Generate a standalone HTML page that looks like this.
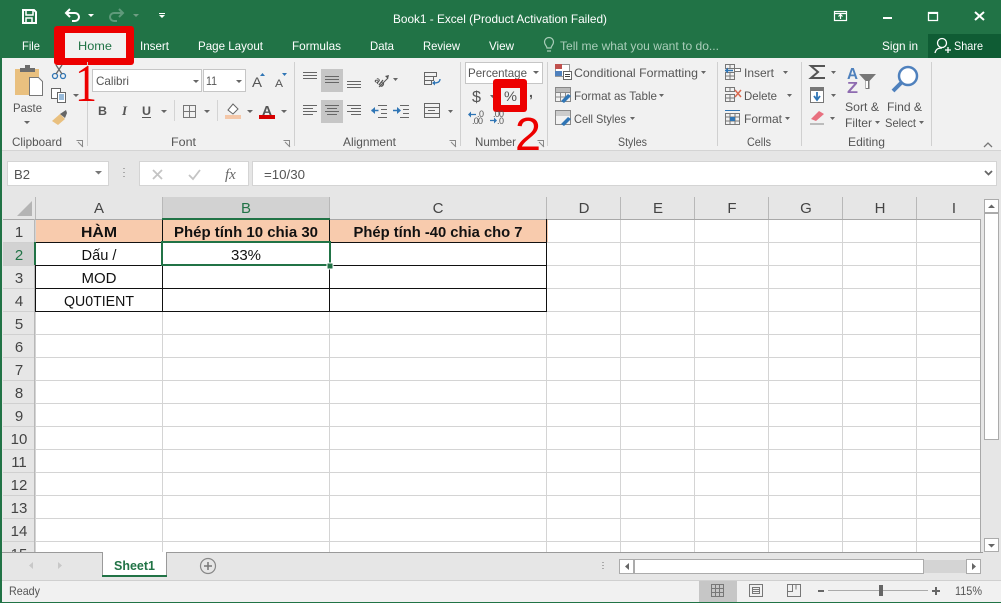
<!DOCTYPE html>
<html><head><meta charset="utf-8"><style>
html,body{margin:0;padding:0;background:#e6e6e6;width:1001px;height:603px;overflow:hidden}
svg{display:block}
text{font-family:"Liberation Sans",sans-serif;font-size:12px;fill:#444}
.w{fill:#fff}
.g{fill:#555}
.c{fill:#111;font-size:15px;text-anchor:middle}
.b{font-weight:bold}
.h{fill:#444;font-size:15px;text-anchor:middle}
.a{fill:#217346;font-size:15px;text-anchor:middle}
</style></head><body>
<svg width="1001" height="603" viewBox="0 0 1001 603" xmlns="http://www.w3.org/2000/svg">
<!-- backgrounds -->
<rect width="1001" height="603" fill="#e6e6e6"/>
<rect width="1001" height="58" fill="#217346"/>
<rect y="58" width="1001" height="92" fill="#f1f1f1"/>
<rect y="150" width="1001" height="1" fill="#d4d4d4"/>
<rect x="928" y="34" width="73" height="24" fill="#0f5c34"/>

<!-- Home highlight -->
<rect x="54" y="26" width="80" height="39" rx="3" fill="#ed0000"/>
<rect x="65" y="33" width="61" height="25" fill="#f1f1f1"/>

<!-- QAT -->
<g fill="none" stroke="#fff" stroke-width="2">
<path d="M23 10h11l2 2v11H23z"/><path d="M26 10v5h7v-5" stroke-width="1.500"/><path d="M26 23v-5h6v5" stroke-width="1.500"/>
<path d="M66 13h9a4 4 0 0 1 0 8h-3"/><path d="M70 9l-4 4 4 4"/>
</g>
<path d="M88 14h6l-3 3z" fill="#fff"/><path d="M133 14h6l-3 3z" fill="#6f9e83"/>
<g fill="none" stroke="#5f9a7b" stroke-width="2"><path d="M123 13h-9a4 4 0 0 0 0 8h3"/><path d="M119 9l4 4-4 4"/></g>
<path d="M159 13h6v1h-6z M159 15h6l-3 3z" fill="#fff"/>

<!-- title -->
<text x="393" y="23" class="w" textLength="214" lengthAdjust="spacingAndGlyphs">Book1 - Excel (Product Activation Failed)</text>
<g fill="none" stroke="#fff" stroke-width="1.200"><rect x="834.500" y="11.500" width="12" height="9"/><path d="M835 13.500h11M840.500 19v-4M838.500 16.500l2-2 2 2"/></g>
<rect x="883" y="17" width="9" height="2" fill="#fff"/>
<path d="M928.500 12.500h9v8h-9z" fill="none" stroke="#fff" stroke-width="1.300"/><rect x="928" y="12" width="10" height="2" fill="#fff"/>
<path d="M975 12l9 8M984 12l-9 8" stroke="#fff" stroke-width="2"/>

<!-- tabs -->
<text x="22" y="50" class="w" textLength="18" lengthAdjust="spacingAndGlyphs">File</text>
<text x="78" y="50" style="fill:#217346" textLength="34" lengthAdjust="spacingAndGlyphs">Home</text>
<text x="140" y="50" class="w" textLength="29" lengthAdjust="spacingAndGlyphs">Insert</text>
<text x="198" y="50" class="w" textLength="65" lengthAdjust="spacingAndGlyphs">Page Layout</text>
<text x="292" y="50" class="w" textLength="49" lengthAdjust="spacingAndGlyphs">Formulas</text>
<text x="370" y="50" class="w" textLength="24" lengthAdjust="spacingAndGlyphs">Data</text>
<text x="423" y="50" class="w" textLength="37" lengthAdjust="spacingAndGlyphs">Review</text>
<text x="489" y="50" class="w" textLength="25" lengthAdjust="spacingAndGlyphs">View</text>
<text x="560" y="50" style="fill:#a9cdb9" textLength="159" lengthAdjust="spacingAndGlyphs">Tell me what you want to do...</text>
<text x="882" y="50" class="w" textLength="36" lengthAdjust="spacingAndGlyphs">Sign in</text>
<text x="954" y="50" class="w" textLength="29" lengthAdjust="spacingAndGlyphs">Share</text>
<g fill="none" stroke="#a9cdb9" stroke-width="1.200"><path d="M547 48c0-2-2.500-3-2.500-6a4.500 4.500 0 0 1 9 0c0 3-2.500 4-2.500 6zM547 51h4"/></g>
<g fill="none" stroke="#fff" stroke-width="1.300"><circle cx="942" cy="43" r="4.500"/><path d="M935 53c1-4 3-5 7-5M945 50h6M948 47v6"/></g>

<!-- clipboard -->
<path d="M15 69h9v-1h8v1h7v26H15z" fill="#e9c07f"/><rect x="20" y="68" width="15" height="4" fill="#6d6d6d"/><rect x="25" y="65" width="5" height="4" fill="#6d6d6d"/>
<path d="M29.500 77.500h9l4 4v14h-13z" fill="#fff" stroke="#777"/>
<text x="13" y="112" class="g" textLength="29" lengthAdjust="spacingAndGlyphs">Paste</text>
<path d="M24 121h6l-3 3zM73 94h6l-3 3z" fill="#666"/>
<g fill="none" stroke="#2f75b5" stroke-width="1.300"><circle cx="55" cy="76" r="2.500"/><circle cx="63" cy="76" r="2.500"/></g><path d="M56 74l6-9M62 74l-6-9" stroke="#666" stroke-width="1.300"/>
<g fill="#fff" stroke="#666"><rect x="51.500" y="88.500" width="9" height="10"/><rect x="57.500" y="92.500" width="8" height="10"/></g><path d="M59 95h5M59 97h5M59 99h5" stroke="#2f75b5"/>
<path d="M52 121l8-7 5 5-7 6z" fill="#e9c07f"/><path d="M60 114l6-4 1 3-2 5z" fill="#666"/>
<text x="12" y="146" class="g" textLength="50" lengthAdjust="spacingAndGlyphs">Clipboard</text>
<path d="M76.500 140.500h6v6M78 142l5 5" fill="none" stroke="#888"/>
<rect x="87" y="62" width="1" height="84" fill="#d0d0d0"/>

<!-- font -->
<rect x="92.500" y="69.500" width="109" height="22" fill="#fff" stroke="#c6c6c6"/><rect x="203.500" y="69.500" width="42" height="22" fill="#fff" stroke="#c6c6c6"/>
<text x="96" y="85" class="g" textLength="33" lengthAdjust="spacingAndGlyphs">Calibri</text>
<text x="206" y="85" class="g" textLength="11" lengthAdjust="spacingAndGlyphs">11</text>
<path d="M193 80h6l-3 3zM236 80h6l-3 3z" fill="#666"/>
<text x="252" y="87" class="g" style="font-size:14px" textLength="10" lengthAdjust="spacingAndGlyphs">A</text><path d="M260 76h5l-2.500-3z" fill="#2f75b5"/>
<text x="275" y="87" class="g" style="font-size:11px" textLength="8" lengthAdjust="spacingAndGlyphs">A</text><path d="M282 73h5l-2.500 3z" fill="#2f75b5"/>
<text x="98" y="115" class="g b" textLength="9" lengthAdjust="spacingAndGlyphs">B</text>
<text x="122" y="115" class="g" style="font-style:italic;font-family:'Liberation Serif',serif;font-size:13px;font-weight:bold">I</text>
<text x="142" y="115" class="g b" textLength="9" lengthAdjust="spacingAndGlyphs">U</text><rect x="142" y="117" width="9" height="1" fill="#555"/>
<path d="M161 110h6l-3 3zM204 110h6l-3 3zM247 110h6l-3 3zM281 110h6l-3 3z" fill="#666"/>
<rect x="174" y="100" width="1" height="21" fill="#d4d4d4"/><rect x="217" y="100" width="1" height="21" fill="#d4d4d4"/>
<path d="M183.500 105.500h12v12h-12zM189.500 105v13M183 111.500h13" fill="none" stroke="#777"/>
<path d="M228 110l5-6 5 5-5 5z" fill="#fff" stroke="#666"/><rect x="225" y="115" width="16" height="4" fill="#f4c7a8"/>
<text x="262" y="115" class="g b" style="font-size:13px" textLength="10" lengthAdjust="spacingAndGlyphs">A</text><rect x="259" y="115" width="16" height="4" fill="#d60000"/>
<text x="171" y="146" class="g" textLength="25" lengthAdjust="spacingAndGlyphs">Font</text>
<path d="M283.500 140.500h6v6M285 142l5 5" fill="none" stroke="#888"/>
<rect x="294" y="62" width="1" height="84" fill="#d0d0d0"/>

<!-- alignment -->
<rect x="321" y="69" width="22" height="23" fill="#c6c6c6"/><rect x="321" y="100" width="22" height="23" fill="#c6c6c6"/>
<g stroke="#666" fill="none">
<path d="M303 72.500h14M303 75.500h14M303 78.500h14"/>
<path d="M325 76.500h14M325 79.500h14M325 82.500h14"/>
<path d="M347 81.500h14M347 84.500h14M347 87.500h14"/>
<path d="M303 105.500h14M303 108.500h10M303 111.500h14M303 114.500h10"/>
<path d="M325 105.500h14M327 108.500h10M325 111.500h14M327 114.500h10"/>
<path d="M347 105.500h14M351 108.500h10M347 111.500h14M351 114.500h10"/>
<path d="M378 105.500h9M381 109.500h6M381 113.500h6M378 117.500h9M400 105.500h9M403 109.500h6M403 113.500h6M400 117.500h9"/>
<path d="M424.500 72.500h12v4h-12zM424.500 76.500h9v4h-9zM424.500 80.500h7v4h-7z"/>
<path d="M424.500 103.500h15v14h-15zM424 107.500h16M424 113.500h16"/>
<path d="M428 110.500h7"/>
</g>
<text x="374" y="81" transform="rotate(40 374 81)" class="g b" style="font-size:9px">ab</text>
<path d="M379 87l9-9" stroke="#555"/><path d="M385 76l4-1-1 4z" fill="#555"/>
<path d="M371.500 110.500h7M393 110.500h7" stroke="#2f75b5" stroke-width="1.500" fill="none"/><path d="M371 110.500l4-3.500v7z" fill="#2f75b5"/><path d="M401 110.500l-4-3.500v7z" fill="#2f75b5"/>
<path d="M393 78h5l-2.500 3zM448 110h5l-2.500 3z" fill="#666"/>
<path d="M440 79c0 3-2 4-7 4" fill="none" stroke="#2f75b5" stroke-width="1.300"/><path d="M432 83l3-2.500v5z" fill="#2f75b5"/>
<text x="343" y="146" class="g" textLength="53" lengthAdjust="spacingAndGlyphs">Alignment</text>
<path d="M449.500 140.500h6v6M451 142l5 5" fill="none" stroke="#888"/>
<rect x="460" y="62" width="1" height="84" fill="#d0d0d0"/>

<!-- number -->
<rect x="465.500" y="62.500" width="77" height="21" fill="#fff" stroke="#c6c6c6"/>
<text x="468" y="77" class="g" textLength="59" lengthAdjust="spacingAndGlyphs">Percentage</text>
<path d="M533 71h6l-3 3z" fill="#666"/>
<text x="472" y="102" class="g" style="font-size:16px" textLength="9" lengthAdjust="spacingAndGlyphs">$</text>
<path d="M490 95h5l-2.500 3z" fill="#666"/>
<rect x="493" y="79" width="34" height="33" rx="3" fill="#ed0000"/>
<rect x="501" y="88" width="19" height="17" fill="#f1f1f1"/>
<text x="504" y="101" class="g" style="font-size:14px" textLength="13" lengthAdjust="spacingAndGlyphs">%</text>
<text x="529" y="97" class="g b" style="font-size:14px">,</text>
<text x="477" y="117" class="g" style="font-size:9px" textLength="7">.0</text><text x="472" y="124" class="g" style="font-size:9px" textLength="11">.00</text>
<text x="493" y="117" class="g" style="font-size:9px" textLength="11">.00</text><text x="497" y="124" class="g" style="font-size:9px" textLength="7">.0</text>
<path d="M469 114.500h7M490 120.500h6" stroke="#2f75b5" stroke-width="1.200" fill="none"/><path d="M468 114.500l3-3v6z" fill="#2f75b5"/><path d="M497 120.500l-3-3v6z" fill="#2f75b5"/>
<text x="475" y="146" class="g" textLength="41" lengthAdjust="spacingAndGlyphs">Number</text>
<path d="M537.500 140.500h6v6M539 142l5 5" fill="none" stroke="#888"/>
<rect x="547" y="62" width="1" height="84" fill="#d0d0d0"/>

<!-- styles -->
<rect x="555.500" y="64.500" width="14" height="12" fill="#fff" stroke="#999"/>
<rect x="555" y="64" width="7" height="5" fill="#c0504d"/><rect x="555" y="71" width="7" height="5" fill="#4f81bd"/>
<rect x="563.500" y="71.500" width="8" height="8" fill="#fff" stroke="#666"/><path d="M565 74.500h5M565 76.500h5" stroke="#444"/>
<g fill="none" stroke="#888"><path d="M555.500 87.500h15v14h-15zM555.500 92.500h15M555.500 97h15M560.500 87.500v14M565.500 87.500v14"/><path d="M555.500 110.500h15v14h-15z"/></g>
<rect x="556" y="88" width="14" height="4" fill="#bbb"/><rect x="556" y="111" width="14" height="5" fill="#ccc"/>
<path d="M561 101l7-7 3 2-7 7zM561 124l7-7 3 2-7 7z" fill="#2f75b5"/>
<text x="574" y="77" class="g" textLength="124" lengthAdjust="spacingAndGlyphs">Conditional Formatting</text>
<text x="574" y="100" class="g" textLength="83" lengthAdjust="spacingAndGlyphs">Format as Table</text>
<text x="574" y="123" class="g" textLength="52" lengthAdjust="spacingAndGlyphs">Cell Styles</text>
<path d="M701 71h5l-2.500 3zM659 94h5l-2.500 3zM630 117h5l-2.500 3z" fill="#666"/>
<text x="618" y="146" class="g" textLength="29" lengthAdjust="spacingAndGlyphs">Styles</text>
<rect x="717" y="62" width="1" height="84" fill="#d0d0d0"/>

<!-- cells -->
<g fill="none" stroke="#777">
<path d="M725.500 64.500h9v4h-9zM730 64.500v4M725.500 72.500h9v7h-9zM725.500 76h9M730 72.500v7"/>
<path d="M725.500 87.500h9v4h-9zM730 87.500v4M725.500 94.500h9v7h-9zM725.500 98h9M730 94.500v7"/>
<path d="M725.500 113.500h14v11h-14zM725.500 117h14M725.500 121h14M730 113.500v11M735 113.500v11"/>
</g>
<rect x="734.500" y="68.500" width="6" height="3" fill="#fff" stroke="#777"/>
<path d="M725 70.500h8" stroke="#2f75b5" stroke-width="1.500"/><path d="M725 70.500l3-3v6z" fill="#2f75b5"/>
<path d="M735 90l6 7M741 90l-6 7" stroke="#d9694f" stroke-width="1.500"/>
<path d="M725 110.500h15" stroke="#2f75b5"/>
<rect x="730" y="117" width="5" height="4" fill="#2f75b5"/>
<text x="744" y="77" class="g" textLength="30" lengthAdjust="spacingAndGlyphs">Insert</text>
<text x="744" y="100" class="g" textLength="33" lengthAdjust="spacingAndGlyphs">Delete</text>
<text x="744" y="123" class="g" textLength="38" lengthAdjust="spacingAndGlyphs">Format</text>
<path d="M783 71h5l-2.500 3zM787 94h5l-2.500 3zM785 117h5l-2.500 3z" fill="#666"/>
<text x="747" y="146" class="g" textLength="24" lengthAdjust="spacingAndGlyphs">Cells</text>
<rect x="801" y="62" width="1" height="84" fill="#d0d0d0"/>

<!-- editing -->
<path d="M825 66h-14l7 6-7 6h14" fill="none" stroke="#555" stroke-width="2"/>
<rect x="810.500" y="88.500" width="13" height="14" fill="#fff" stroke="#777"/><rect x="810" y="87" width="14" height="4" fill="#777"/><path d="M817 92v7M814 96l3 4 3-4" fill="none" stroke="#2f75b5" stroke-width="1.800"/>
<path d="M811 119l8-8 5 3-8 7z" fill="#e8707f"/><path d="M810 124h14" stroke="#888"/>
<path d="M831 71h5l-2.500 3zM831 94h5l-2.500 3zM830 117h5l-2.500 3z" fill="#666"/>
<text x="847" y="79" style="font-size:16px;fill:#4f81bd;font-weight:bold" textLength="11" lengthAdjust="spacingAndGlyphs">A</text>
<text x="847" y="93" style="font-size:16px;fill:#8e6bb0;font-weight:bold" textLength="11" lengthAdjust="spacingAndGlyphs">Z</text>
<path d="M859 74h17l-6.500 7v8h-4v-8z" fill="#777"/><path d="M866 81h2v7h-2z" fill="#fff"/>
<circle cx="908" cy="76" r="9" fill="#fff" stroke="#4f81bd" stroke-width="2.500"/><path d="M901 83l-8 8" stroke="#4f81bd" stroke-width="4"/>
<text x="845" y="111" class="g" textLength="34" lengthAdjust="spacingAndGlyphs">Sort &amp;</text>
<text x="845" y="127" class="g" textLength="27" lengthAdjust="spacingAndGlyphs">Filter</text>
<text x="887" y="111" class="g" textLength="35" lengthAdjust="spacingAndGlyphs">Find &amp;</text>
<text x="885" y="127" class="g" textLength="31" lengthAdjust="spacingAndGlyphs">Select</text>
<path d="M875 121h5l-2.500 3zM919 121h5l-2.500 3z" fill="#666"/>
<text x="848" y="146" class="g" textLength="37" lengthAdjust="spacingAndGlyphs">Editing</text>
<rect x="931" y="62" width="1" height="84" fill="#d0d0d0"/>
<path d="M984 147l4-4 4 4" fill="none" stroke="#777" stroke-width="1.300"/>

<!-- red numerals -->
<text x="75" y="101" style="font-size:53px;fill:#ed0000;font-family:'Liberation Serif',serif" textLength="22" lengthAdjust="spacingAndGlyphs">1</text>
<text x="515" y="150" style="font-size:46px;fill:#ed0000" textLength="26" lengthAdjust="spacingAndGlyphs">2</text>

<!-- formula bar -->
<rect x="7.500" y="161.500" width="101" height="24" fill="#fff" stroke="#d4d4d4"/>
<text x="14" y="179" class="g" style="font-size:13px" textLength="16" lengthAdjust="spacingAndGlyphs">B2</text>
<path d="M95 171h7l-3.500 3.500z" fill="#777"/>
<path d="M124 168v1M124 172v1M124 176v1" stroke="#aaa" stroke-width="2"/>
<rect x="139.500" y="161.500" width="109" height="24" fill="#fff" stroke="#d4d4d4"/>
<rect x="252.500" y="161.500" width="744" height="24" fill="#fff" stroke="#d4d4d4"/>
<path d="M153 170l9 9M162 170l-9 9" stroke="#c4c4c4" stroke-width="1.800"/>
<path d="M189 175l4 4 7-9" fill="none" stroke="#c4c4c4" stroke-width="1.800"/>
<text x="225" y="179" style="font-family:'Liberation Serif',serif;font-style:italic;font-size:15px;fill:#666">fx</text>
<text x="264" y="179" class="g" style="font-size:13px" textLength="41" lengthAdjust="spacingAndGlyphs">=10/30</text>
<path d="M985 171l3.500 3.500 3.500-3.500" fill="none" stroke="#666" stroke-width="1.800"/>

<!-- grid -->
<rect x="35" y="219" width="945" height="333" fill="#fff"/>
<rect x="3" y="197" width="977" height="22" fill="#e6e6e6"/>
<rect x="162" y="197" width="168" height="22" fill="#d2d2d2"/>
<rect x="3" y="242" width="32" height="23" fill="#d2d2d2"/>
<path d="M32 201v15H17z" fill="#b4b4b4"/>
<rect x="35" y="219" width="513" height="23" fill="#f8cbad"/>
<g stroke="#d4d4d4" fill="none">
<path d="M35.500 219v333M162.500 219v333M329.500 219v333M546.500 219v333M620.500 219v333M694.500 219v333M768.500 219v333M842.500 219v333M916.500 219v333"/>
<path d="M35 242.500h945M35 265.500h945M35 288.500h945M35 311.500h945M35 334.500h945M35 357.500h945M35 380.500h945M35 403.500h945M35 426.500h945M35 449.500h945M35 472.500h945M35 495.500h945M35 518.500h945M35 541.500h945"/>
<path d="M35.500 197v22M162.500 197v22M329.500 197v22M546.500 197v22M620.500 197v22M694.500 197v22M768.500 197v22M842.500 197v22M916.500 197v22" stroke="#b8b8b8"/>
</g>
<path d="M3 219.500h977" stroke="#a8a8a8"/>
<path d="M980.500 219v333" stroke="#a8a8a8"/>
<path d="M35 242.500h512M35 265.500h512M35 288.500h512M35 311.500h512M35.500 242v70M162.500 219v93M329.500 219v93M546.500 219v93" stroke="#111" fill="none" stroke-width="1"/>
<path d="M3 242.500h32M3 265.500h32M3 288.500h32M3 311.500h32M3 334.500h32M3 357.500h32M3 380.500h32M3 403.500h32M3 426.500h32M3 449.500h32M3 472.500h32M3 495.500h32M3 518.500h32M3 541.500h32" stroke="#d0d0d0"/>
<path d="M34.500 219v333" stroke="#b8b8b8"/>

<text x="99" y="213" class="h">A</text><text x="246" y="213" class="a">B</text><text x="438" y="213" class="h">C</text><text x="584" y="213" class="h">D</text><text x="658" y="213" class="h">E</text><text x="732" y="213" class="h">F</text><text x="806" y="213" class="h">G</text><text x="880" y="213" class="h">H</text><text x="954" y="213" class="h">I</text>
<text x="19" y="237" class="h">1</text><text x="19" y="260" class="a">2</text><text x="19" y="283" class="h">3</text><text x="19" y="306" class="h">4</text><text x="19" y="329" class="h">5</text><text x="19" y="352" class="h">6</text><text x="19" y="375" class="h">7</text><text x="19" y="398" class="h">8</text><text x="19" y="421" class="h">9</text><text x="19" y="444" class="h">10</text><text x="19" y="467" class="h">11</text><text x="19" y="490" class="h">12</text><text x="19" y="513" class="h">13</text><text x="19" y="536" class="h">14</text><text x="19" y="559" class="h">15</text>

<text x="99" y="237" class="c b" textLength="36" lengthAdjust="spacingAndGlyphs">HÀM</text>
<text x="246" y="237" class="c b" textLength="144" lengthAdjust="spacingAndGlyphs">Phép tính 10 chia 30</text>
<text x="438" y="237" class="c b" textLength="169" lengthAdjust="spacingAndGlyphs">Phép tính -40 chia cho 7</text>
<text x="99" y="260" class="c" textLength="35" lengthAdjust="spacingAndGlyphs">Dấu /</text>
<text x="246" y="260" class="c" textLength="30" lengthAdjust="spacingAndGlyphs">33%</text>
<text x="99" y="283" class="c" textLength="35" lengthAdjust="spacingAndGlyphs">MOD</text>
<text x="99" y="306" class="c" textLength="70" lengthAdjust="spacingAndGlyphs">QU0TIENT</text>

<!-- selection -->
<rect x="162" y="242" width="168" height="23" fill="none" stroke="#217346" stroke-width="2"/>
<rect x="162" y="218" width="168" height="2" fill="#217346"/>
<rect x="34" y="242" width="2" height="23" fill="#217346"/>
<rect x="327" y="263" width="6" height="6" fill="#217346" stroke="#fff"/>

<!-- v scrollbar -->
<rect x="981" y="197" width="20" height="355" fill="#e6e6e6"/>
<rect x="984.500" y="199.500" width="14" height="13" fill="#fff" stroke="#ababab"/>
<rect x="984.500" y="213.500" width="14" height="226" fill="#fff" stroke="#ababab"/>
<rect x="984.500" y="538.500" width="14" height="13" fill="#fff" stroke="#ababab"/>
<path d="M988 208l3.500-3.500 3.500 3.500zM988 544h7l-3.500 3.500z" fill="#666"/>

<!-- sheet bar -->
<rect x="2" y="552" width="999" height="28" fill="#e6e6e6"/>
<path d="M2 552.500h981" stroke="#9a9a9a"/>
<rect x="103" y="552" width="64" height="25" fill="#fff"/>
<path d="M102.500 552v25M166.500 552v25" stroke="#9a9a9a"/>
<rect x="102" y="575" width="65" height="2" fill="#217346"/>
<text x="114" y="570" style="fill:#217346;font-size:13px;font-weight:bold" textLength="41" lengthAdjust="spacingAndGlyphs">Sheet1</text>
<path d="M33 562l-4 3.500 4 3.500zM58 562l4 3.500-4 3.500z" fill="#c8c8c8"/>
<circle cx="208" cy="566" r="7.500" fill="none" stroke="#888" stroke-width="1.200"/><path d="M204 566h8M208 562v8" stroke="#777" stroke-width="1.500"/>
<path d="M603 562v1M603 565v1M603 568v1" stroke="#aaa" stroke-width="2"/>
<rect x="619.500" y="559.500" width="14" height="14" fill="#fff" stroke="#ababab"/>
<rect x="634.500" y="559.500" width="289" height="14" fill="#fff" stroke="#ababab"/>
<rect x="924" y="560" width="42" height="13" fill="#d4d4d4"/>
<rect x="966.500" y="559.500" width="14" height="14" fill="#fff" stroke="#ababab"/>
<path d="M629 563v7l-4-3.500zM972 563v7l4-3.500z" fill="#666"/>

<!-- status -->
<rect x="2" y="581" width="999" height="21" fill="#f1f1f1"/>
<path d="M2 580.500h999" stroke="#d0d0d0"/>
<text x="9" y="595" class="g" textLength="31" lengthAdjust="spacingAndGlyphs">Ready</text>
<rect x="699" y="581" width="38" height="21" fill="#c6c6c6"/>
<path d="M711.500 584.500h12v12h-12zM711.500 588.500h12M711.500 592.500h12M715.500 584.500v12M719.500 584.500v12" fill="none" stroke="#777"/>
<path d="M749.500 584.500h13v12h-13zM752.500 587.500h7v6h-7zM753 589.500h6M753 591.500h6" fill="none" stroke="#777"/>
<path d="M787.500 584.500h13v12h-13zM787.500 591.500h5v-7M792.500 584.500v5M796 584.500v5" fill="none" stroke="#777"/>
<rect x="818" y="590" width="6" height="2" fill="#666"/>
<rect x="828" y="590" width="100" height="1" fill="#aaa"/>
<rect x="879" y="585" width="4" height="11" fill="#666"/>
<path d="M932 591h8M936 587v8" stroke="#666" stroke-width="2"/>
<text x="955" y="595" class="g" textLength="27" lengthAdjust="spacingAndGlyphs">115%</text>

<!-- window edge -->
<rect x="0" y="0" width="2" height="603" fill="#217346"/>
<rect x="0" y="602" width="1001" height="1" fill="#217346"/>
</svg>
</body></html>
